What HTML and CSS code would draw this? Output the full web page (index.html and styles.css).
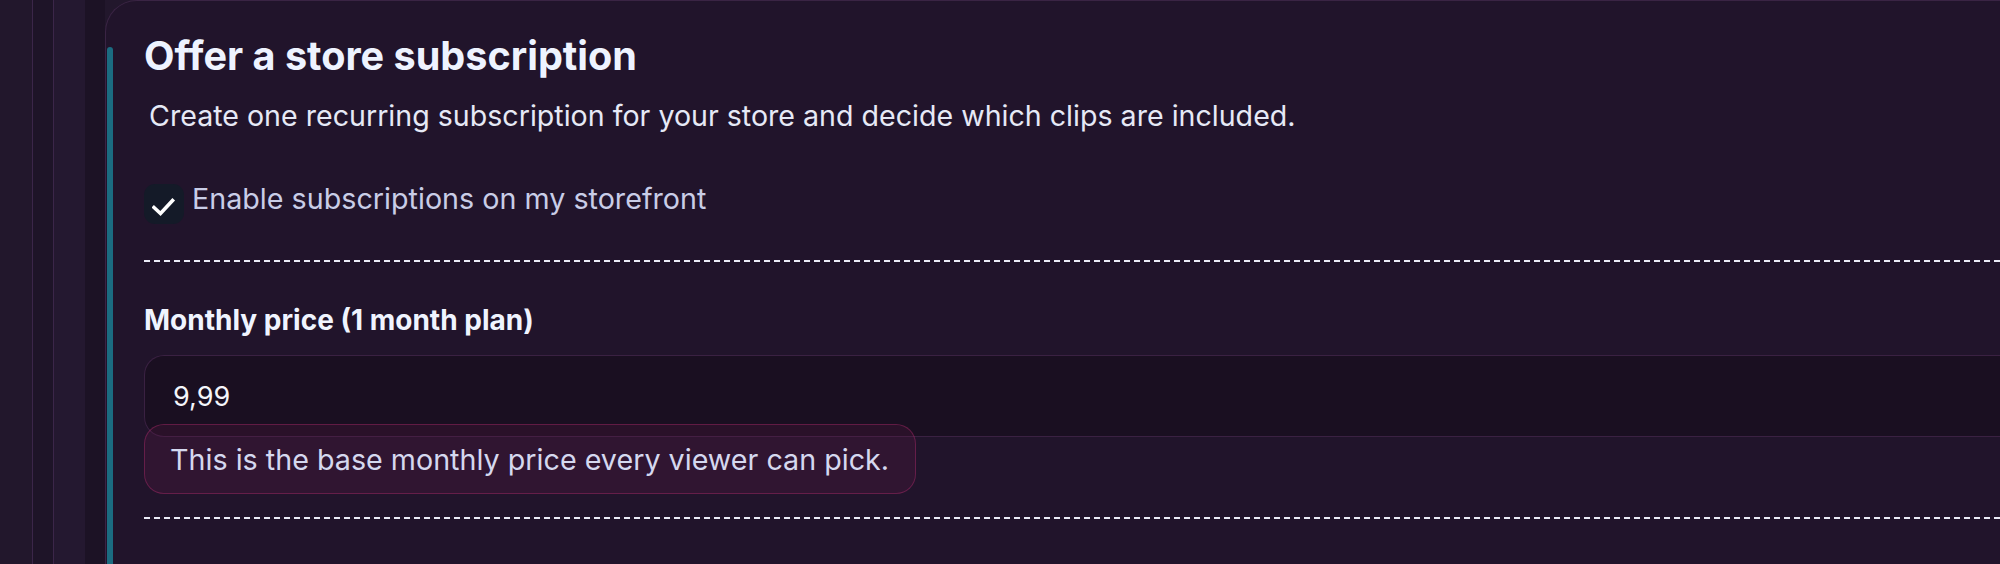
FILE: index.html
```html
<!DOCTYPE html>
<html lang="en">
<head>
<meta charset="utf-8">
<title>Offer a store subscription</title>
<link rel="stylesheet" href="styles.css">
</head>
<body>
<div class="shell">
  <div class="rail rail-a"></div>
  <div class="rail rail-b"></div>
  <div class="rail rail-c"></div>
  <div class="rail rail-d"></div>
  <section class="card">
    <h2 class="title">Offer a store subscription</h2>
    <p class="subtitle">Create one recurring subscription for your store and decide which clips are included.</p>
    <label class="check-row">
      <span class="check-box">
        <svg width="24" height="24" viewBox="0 0 24 24" aria-hidden="true"><polyline points="2,11.5 8.5,17.5 20.5,4.5" fill="none" stroke="#ffffff" stroke-width="3.6" stroke-linecap="square" stroke-linejoin="miter"/></svg>
      </span>
      <span class="check-label">Enable subscriptions on my storefront</span>
    </label>
    <div class="divider"></div>
    <div class="field">
      <div class="field-label">Monthly price (1 month plan)</div>
      <div class="input">9,99</div>
      <div class="hint">This is the base monthly price every viewer can pick.</div>
    </div>
    <div class="divider divider-low"></div>
  </section>
</div>
</body>
</html>
```

FILE: styles.css
```css
* { box-sizing: border-box; }

html, body {
  margin: 0;
  padding: 0;
  height: 564px;
  overflow: hidden;
  background: #22172c;
  font-family: Inter, "Noto Sans", sans-serif;
}

.shell {
  display: flex;
  height: 564px;
}

.rail { flex: 0 0 auto; height: 100%; }
.rail-a { width: 32px; background: #22172c; }
.rail-b { width: 22px; background: #1e1428; border-left: 1px solid #3b2649; border-right: 1px solid #3b2649; }
.rail-c { width: 31px; background: #241830; }
.rail-d { width: 20px; background: #1c1225; }

.card {
  position: relative;
  flex: 0 0 2100px;
  height: 600px;
  background: #21142b;
  border: 1px solid #3a2444;
  border-right: none;
  border-bottom: none;
  border-top-left-radius: 32px;
  padding: 33px 0 0 38px;
}

.card::before {
  content: "";
  position: absolute;
  left: 1px;
  top: 46px;
  bottom: 0;
  width: 6px;
  border-radius: 3px 3px 0 0;
  background: #1b6c81;
}

.title {
  margin: 0;
  font-size: 39.6px;
  line-height: 44px;
  font-weight: 700;
  color: #eef3ff;
}

.subtitle {
  margin: 20px 0 0 5px;
  font-size: 28.6px;
  line-height: 36px;
  color: #e6e9f6;
}

.check-row {
  display: flex;
  align-items: flex-start;
  gap: 8px;
  margin-top: 50px;
}

.check-box {
  width: 40px;
  height: 40px;
  border-radius: 11px;
  background: #141a28;
  display: flex;
  align-items: center;
  justify-content: center;
  padding-top: 7px;
}

.check-label {
  font-size: 28.7px;
  line-height: 30px;
  color: #c9cde7;
}

.divider {
  height: 2px;
  margin-top: 36px;
  background: repeating-linear-gradient(90deg, #ececf8 0 6px, transparent 6px 10px);
}

.field {
  margin-top: 41px;
  display: flex;
  flex-direction: column;
  align-items: flex-start;
}

.field-label {
  font-size: 28px;
  line-height: 34px;
  font-weight: 700;
  color: #f0f4ff;
}

.input {
  align-self: stretch;
  margin-top: 18px;
  height: 82px;
  display: flex;
  align-items: center;
  padding-left: 28px;
  background: #1a0f21;
  border: 1px solid #3a2142;
  border-right: none;
  border-radius: 20px 0 0 20px;
  font-size: 27px;
  color: #f4f5fb;
}

.hint {
  margin-top: -13px;
  height: 70px;
  display: flex;
  align-items: center;
  padding: 0 26px 0 25px;
  background: rgba(110, 25, 75, 0.2);
  border: 1.5px solid rgba(200, 50, 120, 0.35);
  border-radius: 20px;
  font-size: 28.7px;
  color: #d5d8ef;
}

.divider-low {
  margin-top: 23px;
}
```
